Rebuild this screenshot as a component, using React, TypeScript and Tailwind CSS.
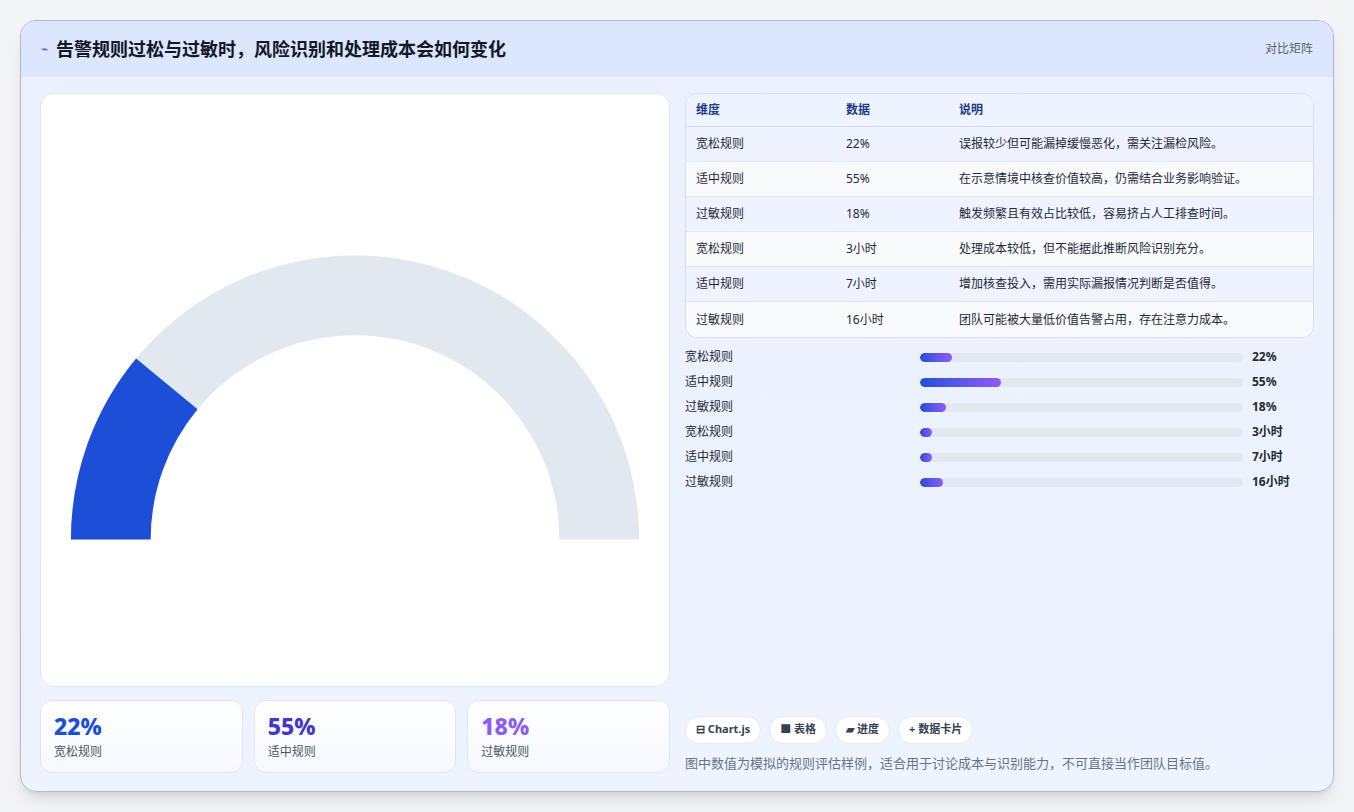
import React from "react";

const rows = [
  ["宽松规则", "22%", "误报较少但可能漏掉缓慢恶化，需关注漏检风险。"],
  ["适中规则", "55%", "在示意情境中核查价值较高，仍需结合业务影响验证。"],
  ["过敏规则", "18%", "触发频繁且有效占比较低，容易挤占人工排查时间。"],
  ["宽松规则", "3小时", "处理成本较低，但不能据此推断风险识别充分。"],
  ["适中规则", "7小时", "增加核查投入，需用实际漏报情况判断是否值得。"],
  ["过敏规则", "16小时", "团队可能被大量低价值告警占用，存在注意力成本。"],
];
const bars = [32, 81, 26, 12, 12, 23];

function arc(r0: number, r1: number, a0: number, a1: number) {
  const cx = 315, cy = 447;
  const p = (r: number, a: number) => [cx - r * Math.cos(a), cy - r * Math.sin(a)];
  const [x0, y0] = p(r1, a0), [x1, y1] = p(r1, a1), [x2, y2] = p(r0, a1), [x3, y3] = p(r0, a0);
  return `M${x0} ${y0} A${r1} ${r1} 0 0 1 ${x1} ${y1} L${x2} ${y2} A${r0} ${r0} 0 0 0 ${x3} ${y3} Z`;
}

export default function App() {
  const f = { fontFamily: '"Noto Sans", "Noto Sans CJK SC", sans-serif' };
  return (
    <div style={f} className="w-[1354px] h-[812px] bg-[#f3f4f6] pt-[20px] px-[20px]">
      <div className="w-[1314px] h-[772px] rounded-[16px] border border-[#a9b8e6] bg-gradient-to-b from-[#eaf0fd] to-[#eef4fe] overflow-hidden shadow-lg flex flex-col">
        <div className="h-[56px] bg-[#dce6fd] flex items-center justify-between px-[20px] shrink-0">
          <div className="flex items-center gap-[8px]">
            <span className="text-[#4f5ee0] text-[12px]">⌁</span>
            <span className="text-[18px] font-bold text-[#111827]">告警规则过松与过敏时，风险识别和处理成本会如何变化</span>
          </div>
          <span className="text-[12px] text-[#5b6475]">对比矩阵</span>
        </div>
        <div className="flex gap-[15px] px-[19px] pt-[16px] flex-1">
          <div className="w-[630px] flex flex-col gap-[13px]">
            <div className="h-[594px] bg-white rounded-[14px] border border-[#dfe6f5] flex items-center justify-center">
              <svg width="630" height="594" viewBox="0 0 630 594">
                <path d={arc(205, 285, 0, Math.PI)} fill="#e2e8f0" />
                <path d={arc(205, 285, 0, 0.22 * Math.PI)} fill="#1d4ed8" />
              </svg>
            </div>
            <div className="grid grid-cols-3 gap-[11px]">
              {[["22%", "宽松规则", "text-[#1d4ed8]"], ["55%", "适中规则", "text-[#4338ca]"], ["18%", "过敏规则", "text-[#8b5cf6]"]].map(([v, l, c]) => (
                <div key={l} className="h-[73px] bg-gradient-to-b from-white to-[#f5f8ff] rounded-[12px] border border-[#dfe6f5] px-[13px] pt-[10px]">
                  <div className={`text-[23px] font-extrabold leading-[30px] ${c}`}>{v}</div>
                  <div className="text-[12px] text-[#4b5563] mt-[2px]">{l}</div>
                </div>
              ))}
            </div>
          </div>
          <div className="flex-1 flex flex-col">
            <div className="rounded-[12px] border border-[#d4dced] overflow-hidden bg-white">
              <div className="grid grid-cols-[150px_113px_1fr] h-[33px] items-center px-[10px] text-[12px] font-bold text-[#1e3a8a] bg-[#eef4ff] border-b border-[#d4dced]">
                <span>维度</span><span>数据</span><span>说明</span>
              </div>
              {rows.map((r, i) => (
                <div key={i} className={`grid grid-cols-[150px_113px_1fr] h-[35px] items-center px-[10px] text-[12px] text-[#1f2937] ${i % 2 ? "bg-[#f8fafc]" : "bg-[#eef3ff]"} ${i < 5 ? "border-b border-[#e2e8f0]" : ""}`}>
                  <span>{r[0]}</span><span>{r[1]}</span><span>{r[2]}</span>
                </div>
              ))}
            </div>
            <div className="flex flex-col gap-[7px] mt-[10px]">
              {rows.map((r, i) => (
                <div key={i} className="flex items-center h-[18px] text-[12px]">
                  <span className="w-[235px] text-[#1f2937]">{r[0]}</span>
                  <div className="w-[323px] h-[9px] rounded-full bg-[#e2e8f0] overflow-hidden">
                    <div className="h-full rounded-full bg-gradient-to-r from-[#1d4ed8] to-[#8b5cf6]" style={{ width: bars[i] }} />
                  </div>
                  <span className="ml-[9px] font-bold text-[#1f2937]">{r[1]}</span>
                </div>
              ))}
            </div>
            <div className="mt-auto mb-[18px]">
              <div className="flex gap-[8px]">
                {["⊟ Chart.js", "■ 表格", "▰ 进度", "+ 数据卡片"].map(t => (
                  <span key={t} className="h-[28px] px-[10px] flex items-center rounded-full bg-white border border-[#e5e9f2] text-[11px] font-bold text-[#374151]">{t}</span>
                ))}
              </div>
              <div className="text-[13px] text-[#64748b] mt-[10px]">图中数值为模拟的规则评估样例，适合用于讨论成本与识别能力，不可直接当作团队目标值。</div>
            </div>
          </div>
        </div>
      </div>
    </div>
  );
}
